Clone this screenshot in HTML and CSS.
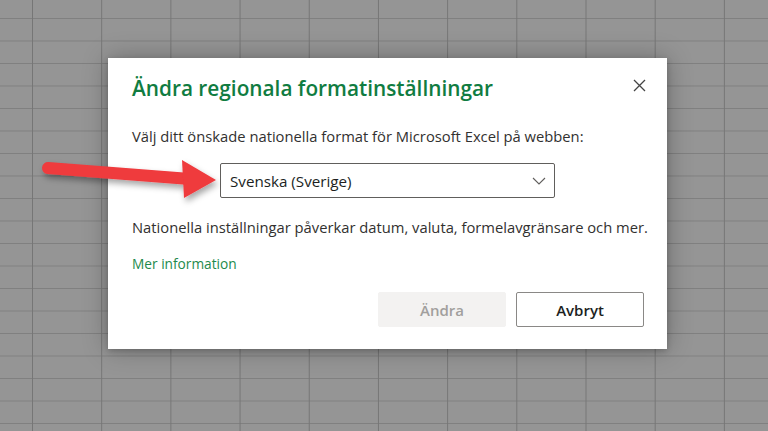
FILE: index.html
```html
<!DOCTYPE html>
<html lang="sv">
<head>
    <meta charset="UTF-8">
    <meta name="viewport" content="width=device-width, initial-scale=1.0">
    <title>Ändra regionala formatinställningar</title>
    <link rel="stylesheet" href="styles.css">
</head>
<body>
    <!-- Sheet grid behind the dialog -->
    <div class="sheet"></div>

    <!-- Dialog -->
    <div class="dialog">
        <button class="close" aria-label="Stäng">
            <svg width="13" height="13" viewBox="0 0 13 13">
                <path d="M1 1 L12 12 M12 1 L1 12" stroke="#444" stroke-width="1.3" fill="none"/>
            </svg>
        </button>

        <h1 class="title">Ändra regionala formatinställningar</h1>
        <p class="text">Välj ditt önskade nationella format för Microsoft Excel på webben:</p>

        <div class="select-row">
            <div class="select">
                <span>Svenska (Sverige)</span>
                <svg width="14" height="8" viewBox="0 0 14 8">
                    <path d="M1 1 L7 7 L13 1" stroke="#605e5c" stroke-width="1.1" fill="none"/>
                </svg>
            </div>
        </div>

        <p class="text note">Nationella inställningar påverkar datum, valuta, formelavgränsare och mer.</p>
        <a class="link" href="#">Mer information</a>

        <div class="actions">
            <button class="btn btn-disabled" disabled>Ändra</button>
            <button class="btn btn-default">Avbryt</button>
        </div>
    </div>

    <!-- Red pointer arrow -->
    <svg class="arrow" width="240" height="60" viewBox="0 0 240 60">
        <defs>
            <filter id="shade" x="-10%" y="-40%" width="130%" height="200%">
                <feDropShadow dx="2" dy="4" stdDeviation="3" flood-color="#000" flood-opacity="0.35"/>
            </filter>
        </defs>
        <g filter="url(#shade)">
            <line x1="48" y1="18" x2="190" y2="29" stroke="#ef3a3e" stroke-width="12" stroke-linecap="round"/>
            <polygon points="182,10 216,30 184,48" fill="#ef3a3e"/>
        </g>
    </svg>
</body>
</html>
```

FILE: styles.css
```css
/* General */
* {
    box-sizing: border-box;
    margin: 0;
    padding: 0;
}

body {
    width: 768px;
    height: 431px;
    overflow: hidden;
    position: relative;
    font-family: "Open Sans", "Noto Sans", sans-serif;
    color: #323130;
}

/* Spreadsheet behind the overlay */
.sheet {
    width: 100%;
    height: 100%;
    background-color: #959595;
    background-image:
        linear-gradient(to right, #767676 1px, transparent 1px),
        linear-gradient(to bottom, #808080 1px, transparent 1px);
    background-size: 69.2px 22.5px;
    background-position: 32px 18px;
}

/* Dialog */
.dialog {
    position: absolute;
    left: 108px;
    top: 58px;
    width: 559px;
    height: 291px;
    background: #ffffff;
    padding: 16px 23px 0 24px;
    box-shadow: 0 0 24px rgba(0, 0, 0, 0.28), 0 2px 6px rgba(0, 0, 0, 0.2);
}

.close {
    position: absolute;
    top: 11px;
    right: 12px;
    width: 32px;
    height: 32px;
    border: none;
    background: none;
    display: flex;
    align-items: center;
    justify-content: center;
}

.title {
    font-size: 20.8px;
    font-weight: 600;
    line-height: 28px;
    color: #107c41;
}

.text {
    font-size: 14.75px;
    line-height: 20px;
    margin-top: 24px;
    white-space: nowrap;
}

.select-row {
    margin-top: 17px;
    padding-left: 88px;
}

.select {
    width: 335px;
    height: 35px;
    border: 1px solid #605e5c;
    border-radius: 2px;
    display: flex;
    align-items: center;
    justify-content: space-between;
    padding: 0 8px 0 9px;
    font-size: 15.2px;
    color: #201f1e;
}

.note {
    margin-top: 19px;
}

.link {
    display: inline-block;
    margin-top: 17px;
    font-size: 13.7px;
    line-height: 20px;
    color: #1d8a4c;
    text-decoration: none;
}

/* Buttons */
.actions {
    display: flex;
    justify-content: flex-end;
    gap: 10px;
    margin-top: 18px;
}

.btn {
    width: 128px;
    height: 35px;
    font-family: inherit;
    font-size: 15px;
    font-weight: 600;
    border-radius: 2px;
}

.btn-disabled {
    background: #f3f2f1;
    border: 1px solid #f3f2f1;
    color: #a19f9d;
}

.btn-default {
    background: #ffffff;
    border: 1px solid #8a8886;
    color: #201f1e;
}

/* Pointer arrow */
.arrow {
    position: absolute;
    left: 0;
    top: 150px;
}
```
